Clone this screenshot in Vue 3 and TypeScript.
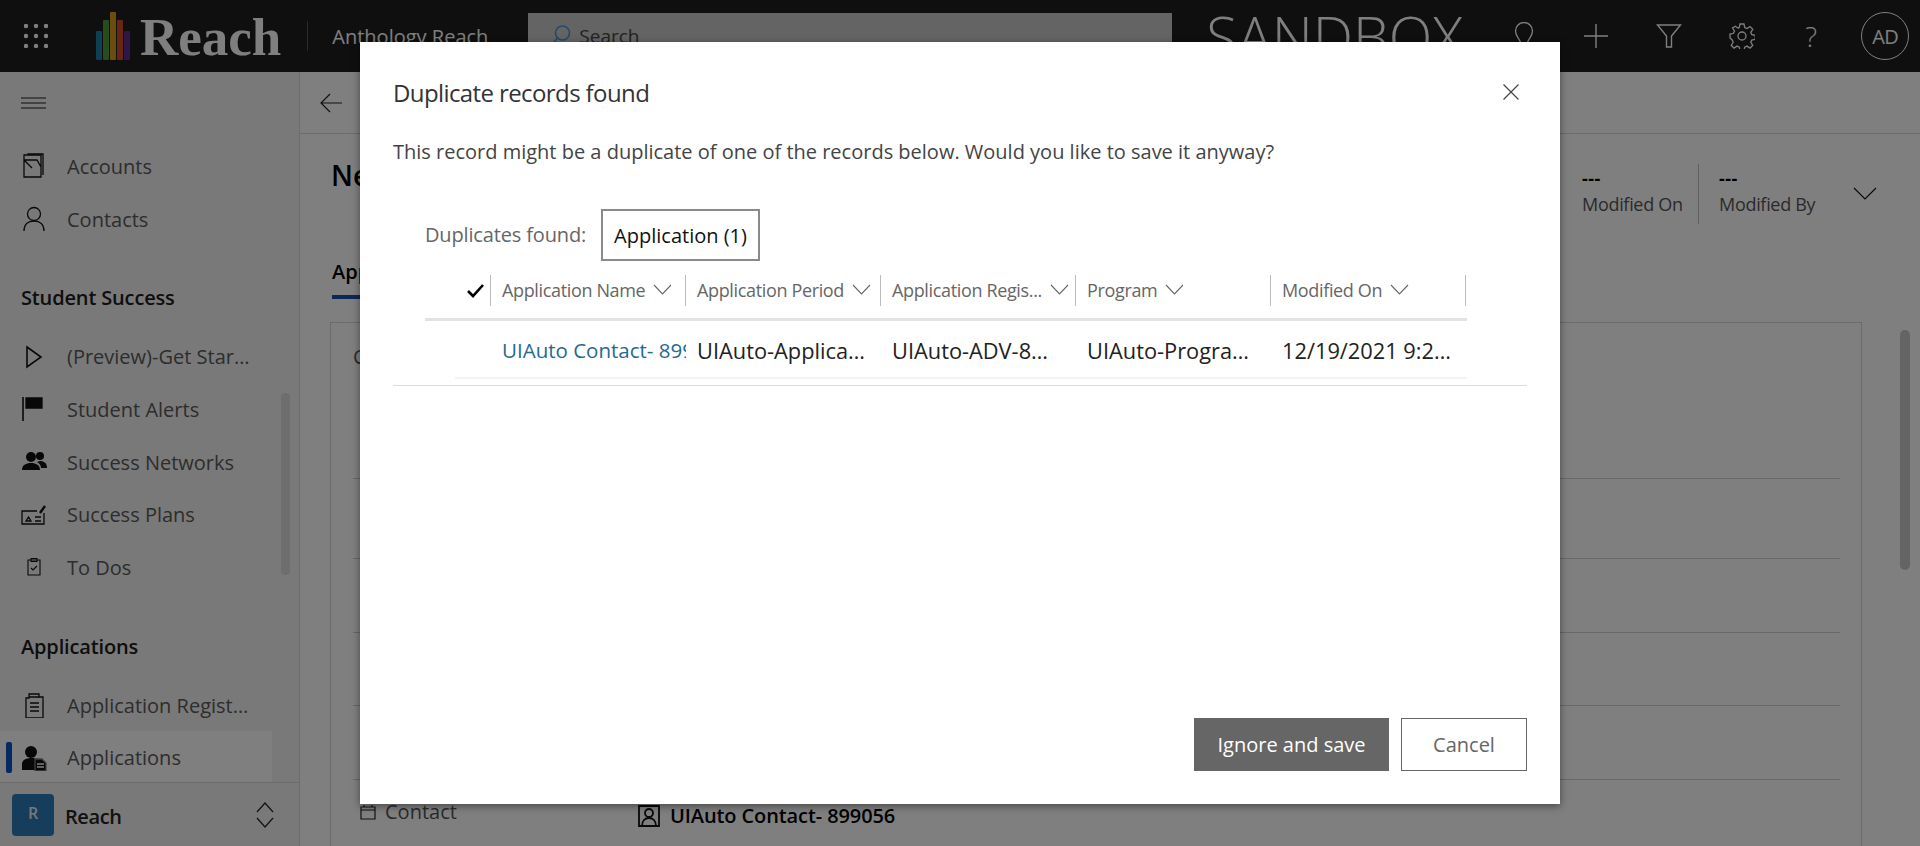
<script setup lang="ts">
import { ref } from 'vue'

interface NavItem {
  label: string
  icon: string
  active?: boolean
}

const topItems: NavItem[] = [
  { label: 'Accounts', icon: 'accounts' },
  { label: 'Contacts', icon: 'contacts' },
]
const successItems: NavItem[] = [
  { label: '(Preview)-Get Started', icon: 'play' },
  { label: 'Student Alerts', icon: 'flag' },
  { label: 'Success Networks', icon: 'people' },
  { label: 'Success Plans', icon: 'plan' },
  { label: 'To Dos', icon: 'todo' },
]
const applicationItems: NavItem[] = [
  { label: 'Application Registrations', icon: 'docs' },
  { label: 'Applications', icon: 'applicant', active: true },
]
const groups = [
  { title: '', items: topItems },
  { title: 'Student Success', items: successItems },
  { title: 'Applications', items: applicationItems },
]

const logoBars = [
  { h: 29, c: '#1d7ea8' },
  { h: 40, c: '#4e9a3a' },
  { h: 48, c: '#d99a1c' },
  { h: 40, c: '#cf4f26' },
  { h: 29, c: '#5d2f8e' },
]

// only the first row's label peeks out from behind the dialog
const formRows = [
  { h: 156, label: 'Contact Information' },
  { h: 80, label: '' },
  { h: 74, label: '' },
  { h: 73, label: '' },
  { h: 74, label: '' },
]

const columns = ['Application Name', 'Application Period', 'Application Regis...', 'Program', 'Modified On']
const cells = ['UIAuto-Application Period', 'UIAuto-ADV-899056', 'UIAuto-Program-899', '12/19/2021 9:27 AM']
const open = ref(true)
</script>

<template>
  <div class="app">
    <header class="topbar">
      <svg class="waffle" width="24" height="24" viewBox="0 0 24 24" fill="#fff">
        <template v-for="y in [2, 12, 22]" :key="y">
          <circle v-for="x in [2, 12, 22]" :key="x" :cx="x" :cy="y" r="2.2" />
        </template>
      </svg>
      <div class="logo">
        <span class="bars">
          <i v-for="b in logoBars" :key="b.c" :style="{ height: b.h + 'px', background: b.c }"></i>
        </span>
        <span class="logo-word">Reach</span>
      </div>
      <span class="top-sep"></span>
      <span class="app-name">Anthology Reach</span>
      <div class="search">
        <svg width="20" height="24" viewBox="0 0 20 24" fill="none" stroke="#4a90d9" stroke-width="1.6">
          <circle cx="11.5" cy="9" r="7" />
          <path d="M6.5 14 1 21" />
        </svg>
        <span>Search</span>
      </div>
      <span class="sandbox">SANDBOX</span>
      <div class="top-icons">
        <svg width="24" height="28" viewBox="0 0 24 28" fill="none" stroke="#fff" stroke-width="1.3">
          <path d="M8.5 21c0-4-5-6-5-12a8.500 8.500 0 0 1 17 0c0 6-5 8-5 12zM9 24h6" />
        </svg>
        <svg width="26" height="26" viewBox="0 0 26 26" stroke="#fff" stroke-width="1.4"><path d="M13 1v24M1 13h24" /></svg>
        <svg width="26" height="24" viewBox="0 0 26 24" fill="none" stroke="#fff" stroke-width="1.4">
          <path d="M1.500 1h23L15.500 12v11h-5V12z" />
        </svg>
        <svg width="26" height="26" viewBox="0 0 26 26" fill="none" stroke="#fff" stroke-width="1.300">
          <circle cx="13" cy="13" r="4" />
          <path d="M11 1h4l.7 3.500 2.300 1 3-2 2.800 2.800-2 3 1 2.300 3.500.7v4l-3.500.7-1 2.300 2 3-2.800 2.800-3-2-2.300 1-.7 3.500h-4l-.7-3.500-2.300-1-3 2-2.800-2.800 2-3-1-2.300L1 15v-4l3.500-.7 1-2.300-2-3L6.300 3.200l3 2 1-.9z" />
        </svg>
        <span class="help">?</span>
      </div>
      <span class="avatar">AD</span>
    </header>

    <div class="shell">
      <aside class="sidebar">
        <div class="nav">
          <button class="menu-btn" aria-label="Menu">
            <svg width="25" height="12" viewBox="0 0 25 12" stroke="#1a1a1a" stroke-width="1.2"><path d="M0 1h25M0 6h25M0 11h25" /></svg>
          </button>
          <section v-for="g in groups" :key="g.title" class="group">
            <h3 v-if="g.title">{{ g.title }}</h3>
            <a v-for="item in g.items" :key="item.label" class="nav-item" :class="{ active: item.active }">
              <span class="nav-icon">
                <svg width="26" height="26" viewBox="0 0 26 26" fill="none" stroke="#111" stroke-width="1.3">
                  <template v-if="item.icon === 'accounts'">
                    <path d="M3 2h17v22H3zM3 7h13l4 7M3 7l8 8" /><path d="M7 2V1h15v21" />
                  </template>
                  <template v-else-if="item.icon === 'contacts'">
                    <circle cx="13" cy="8" r="6.500" /><path d="M3 25c0-7 4-10 10-10s10 3 10 10" />
                  </template>
                  <path v-else-if="item.icon === 'play'" d="M6 3l14 10L6 23z" stroke-width="1.600" />
                  <template v-else-if="item.icon === 'flag'">
                    <path d="M2 1v24" stroke-width="1.600" /><path d="M5 2h16v10H5z" fill="#111" />
                  </template>
                  <g v-else-if="item.icon === 'people'" fill="#111" stroke="none">
                    <circle cx="10" cy="8" r="5" /><circle cx="19" cy="7" r="4" />
                    <path d="M1 21c0-5 4-7 9-7s9 2 9 7zM19 12c4 0 7 2 7 7h-6c0-3-2-5-4-6z" />
                  </g>
                  <template v-else-if="item.icon === 'plan'">
                    <path d="M23 11v11H1V9h15" /><path d="M19 11 24 4" stroke-width="2.400" />
                    <path d="M5 19l2.500-4 2.500 4zM14 15h6M14 19h6" />
                  </template>
                  <template v-else-if="item.icon === 'todo'">
                    <path d="M7 6h12v15H7z" stroke-width="1.100" /><path d="M10 4.500h6v3h-6zM10 14l2 2 4-4" stroke-width="1.100" />
                  </template>
                  <template v-else-if="item.icon === 'docs'">
                    <path d="M8 2h10v3h4v21H5V6h3z" /><path d="M8 5h10M9 11h9M9 15h9M9 19h9" />
                  </template>
                  <g v-else-if="item.icon === 'applicant'" fill="#111" stroke="none">
                    <circle cx="10" cy="7" r="6" />
                    <path d="M1 25v-6c0-4 4-6 10-6 2 0 4 .5 5 1v11z" />
                    <path d="M14 14h7l4 4v8H14z" stroke="#7f7f7f" />
                    <path d="M16 19h7M16 22h7" stroke="#fff" />
                  </g>
                </svg>
              </span>
              <span class="nav-label">{{ item.label }}</span>
            </a>
          </section>
          <span class="nav-scroll"></span>
        </div>
        <footer class="area">
          <span class="area-badge">R</span>
          <span class="area-name">Reach</span>
          <svg width="18" height="26" viewBox="0 0 18 26" fill="none" stroke="#222" stroke-width="1.200"><path d="M1 10 9 1l8 9M1 16l8 9 8-9" /></svg>
        </footer>
      </aside>

      <main class="content">
        <div class="commandbar">
          <svg width="22" height="20" viewBox="0 0 22 20" fill="none" stroke="#222" stroke-width="1.200"><path d="M22 10H1M10 1 1 10l9 9" /></svg>
        </div>
        <div class="form-head">
          <h1>New Application</h1>
          <div class="head-fields">
            <div class="head-field"><b>---</b><span>Modified On</span></div>
            <div class="head-field last"><b>---</b><span>Modified By</span></div>
            <svg width="24" height="13" viewBox="0 0 24 13" fill="none" stroke="#111" stroke-width="1.200"><path d="M1 1l11 11L23 1" /></svg>
          </div>
        </div>
        <div class="form-tabs"><span>Application</span></div>
        <div class="card">
          <div v-for="(r, i) in formRows" :key="i" class="form-row" :style="{ height: r.h + 'px' }">{{ r.label }}</div>
          <div class="contact-row">
            <span class="contact-label">
              <svg width="16" height="16" viewBox="0 0 16 16" fill="none" stroke="#222" stroke-width="1.200"><path d="M1 3h14v12H1zM1 6h14M4 1v2M12 1v2" /></svg>
              Contact
            </span>
            <span class="contact-value">
              <svg width="22" height="22" viewBox="0 0 22 22" fill="none" stroke="#111" stroke-width="1.800"><path d="M1 1h20v20H1z" /><circle cx="11" cy="8" r="4" /><path d="M4 21c0-5 3-8 7-8s7 3 7 8" /></svg>
              UIAuto Contact- 899056
            </span>
          </div>
        </div>
        <span class="page-scroll"></span>
      </main>
    </div>

    <div v-if="open" class="overlay">
      <div class="dialog" role="dialog">
        <div class="dialog-title">
          <h2>Duplicate records found</h2>
          <button class="close" aria-label="Close" @click="open = false">
            <svg width="16" height="16" viewBox="0 0 16 16" stroke="#444" stroke-width="1.200"><path d="M.5.5l15 15M15.500.5l-15 15" /></svg>
          </button>
        </div>
        <p class="message">This record might be a duplicate of one of the records below. Would you like to save it anyway?</p>
        <div class="dup-tabs">
          <span class="dup-label">Duplicates found:</span>
          <span class="dup-tab">Application (1)</span>
        </div>
        <div class="grid">
          <div class="grid-head">
            <span class="check-col">
              <svg width="17" height="14" viewBox="0 0 17 14" fill="none" stroke="#000" stroke-width="2.600"><path d="M1 7l5 5L16 1" /></svg>
            </span>
            <span v-for="c in columns" :key="c" class="col-head">
              <span>{{ c }}</span>
              <svg width="19" height="11" viewBox="0 0 19 11" fill="none" stroke="#666" stroke-width="1.100"><path d="M1 1l8.500 9L18 1" /></svg>
            </span>
          </div>
          <div class="grid-row">
            <a class="cell link">UIAuto Contact- 899056</a>
            <span v-for="c in cells" :key="c" class="cell">{{ c }}</span>
          </div>
        </div>
        <hr class="divider" />
        <div class="actions">
          <button class="primary">Ignore and save</button>
          <button class="secondary" @click="open = false">Cancel</button>
        </div>
      </div>
    </div>
  </div>
</template>

<style scoped>
.app {
  position: relative;
  width: 1920px;
  height: 846px;
  overflow: hidden;
  background: #fff;
  font-family: "Open Sans", "Noto Sans", sans-serif;
  color: #222;
}
.topbar {
  height: 72px;
  background: #1e1e1e;
  display: flex;
  align-items: center;
  padding-left: 24px;
  color: #fff;
  overflow: hidden;
}
.waffle {
  flex: none;
}
.logo {
  display: flex;
  align-items: flex-end;
  gap: 10px;
  margin-left: 48px;
  height: 48px;
}
.bars {
  display: flex;
  align-items: flex-end;
  gap: 1px;
}
.bars i {
  display: block;
  width: 6px;
  border-radius: 1px;
}
.logo-word {
  font-family: "Liberation Serif", serif;
  font-weight: 700;
  font-size: 53px;
  line-height: 46px;
}
.top-sep {
  width: 1px;
  height: 30px;
  background: #555;
  margin-left: 26px;
}
.app-name {
  margin-left: 24px;
  font-size: 20px;
  width: 196px;
  white-space: nowrap;
}
.search {
  align-self: flex-start;
  margin-top: 13px;
  width: 644px;
  height: 46px;
  background: #c8c8c8;
  display: flex;
  align-items: center;
  gap: 8px;
  padding-left: 23px;
  box-sizing: border-box;
  font-size: 19px;
  color: #444;
}
.sandbox {
  margin-left: 34px;
  font-size: 57px;
  font-weight: 300;
  width: 262px;
  white-space: nowrap;
  color: #fff;
}
.top-icons {
  display: flex;
  align-items: center;
  margin-left: 44px;
  gap: 47px;
}
.help {
  font-size: 28px;
  font-weight: 300;
  width: 14px;
  margin-left: 3px;
}
.avatar {
  margin-left: 42px;
  width: 46px;
  height: 46px;
  border: 1px solid #fff;
  border-radius: 50%;
  display: flex;
  align-items: center;
  justify-content: center;
  font-size: 20px;
  letter-spacing: -0.5px;
}
.shell {
  height: 774px;
  display: flex;
}
.sidebar {
  width: 300px;
  flex: none;
  box-sizing: border-box;
  background: #f3f3f3;
  border-right: 1px solid #d8d8d8;
  display: flex;
  flex-direction: column;
}
.nav {
  position: relative;
  height: 710px;
  overflow: hidden;
}
.menu-btn {
  display: block;
  width: 100%;
  height: 62px;
  padding: 0 0 0 21px;
  border: 0;
  background: none;
  text-align: left;
  margin-bottom: 5px;
}
.menu-btn svg {
  display: block;
}
.group + .group {
  margin-top: 27px;
}
.group h3 {
  margin: 0 0 5px;
  height: 53px;
  line-height: 53px;
  padding-left: 21px;
  font-size: 20px;
  font-weight: 600;
  letter-spacing: -0.15px;
  color: #1c1c1c;
}
.nav-item {
  display: flex;
  align-items: center;
  width: 272px;
  height: 52.7px;
  padding: 2px 0 0 21px;
  box-sizing: border-box;
  position: relative;
}
.nav-item.active {
  background: #fff;
}
.nav-item.active::before {
  content: "";
  position: absolute;
  left: 6px;
  top: 11px;
  bottom: 10px;
  width: 6px;
  border-radius: 2px;
  background: #0a52c4;
}
.nav-icon {
  width: 46px;
  flex: none;
  display: flex;
}
.nav-label {
  font-size: 20px;
  color: #5a5a5a;
  width: 185px;
  white-space: nowrap;
  overflow: hidden;
  text-overflow: ellipsis;
}
.nav-scroll {
  position: absolute;
  left: 281px;
  top: 321px;
  width: 9px;
  height: 182px;
  border-radius: 4px;
  background: #dcdcdc;
}
.area {
  flex: 1;
  border-top: 1px solid #d8d8d8;
  display: flex;
  align-items: center;
  padding: 0 25px 0 12px;
}
.area-badge {
  width: 42px;
  height: 42px;
  border-radius: 4px;
  background: #2e7ab8;
  color: #eee;
  font-size: 16px;
  font-weight: 600;
  text-align: center;
  line-height: 38px;
}
.area-name {
  flex: 1;
  margin: 3px 0 0 11px;
  font-size: 20px;
  font-weight: 600;
  letter-spacing: -0.4px;
}
.content {
  flex: 1;
  position: relative;
  min-width: 0;
}
.commandbar {
  height: 62px;
  border-bottom: 1px solid #d8d8d8;
  display: flex;
  align-items: center;
  padding-left: 20px;
  box-sizing: border-box;
}
.form-head {
  display: flex;
  height: 88px;
  padding-left: 31px;
  padding-top: 22px;
  box-sizing: border-box;
}
.form-head h1 {
  margin: 0;
  font-size: 28px;
  line-height: 38px;
  font-weight: 600;
  color: #000;
}
.head-fields {
  margin-left: auto;
  display: flex;
  align-items: flex-start;
  padding-right: 43px;
  margin-top: 8px;
}
.head-field {
  display: flex;
  flex-direction: column;
  width: 118px;
  height: 60px;
  border-right: 1px solid #c0c0c0;
  font-size: 18px;
  letter-spacing: -0.3px;
  color: #555;
  line-height: 24px;
  padding-left: 1px;
  box-sizing: border-box;
}
.head-field b {
  color: #000;
  line-height: 28px;
  letter-spacing: 0.5px;
}
.head-field.last {
  border: 0;
  margin-left: 19px;
  width: 135px;
}
.head-fields svg {
  margin-top: 23px;
}
.form-tabs {
  height: 77px;
  padding: 0 0 0 32px;
  box-sizing: border-box;
}
.form-tabs span {
  display: inline-block;
  padding-top: 36px;
  height: 77px;
  box-sizing: border-box;
  border-bottom: 4px solid #1a4fb0;
  font-size: 20px;
  font-weight: 600;
  color: #000;
}
.card {
  margin: 23px 0 0 30px;
  width: 1532px;
  box-sizing: border-box;
  height: 600px;
  border: 1px solid #d8d8d8;
  padding: 0 21px 0 22px;
}
.form-row {
  box-sizing: border-box;
  padding-top: 20px;
  font-size: 20px;
  color: #555;
  border-bottom: 1px solid #d0d0d0;
}
.contact-row {
  display: flex;
  align-items: flex-start;
  padding: 18px 0 0 7px;
  font-size: 20px;
}
.contact-label {
  display: flex;
  align-items: center;
  gap: 9px;
  width: 278px;
  color: #555;
}
.contact-value {
  display: flex;
  align-items: center;
  gap: 10px;
  margin-top: 4px;
  font-weight: 600;
  color: #000;
  letter-spacing: -0.1px;
}
.page-scroll {
  position: absolute;
  right: 10px;
  top: 258px;
  width: 10px;
  height: 240px;
  border-radius: 5px;
  background: #c8c8c8;
}
.overlay {
  position: absolute;
  inset: 0;
  background: rgba(0, 0, 0, 0.5);
  display: flex;
  justify-content: center;
  align-items: flex-start;
}
.dialog {
  margin-top: 42px;
  width: 1200px;
  height: 762px;
  box-sizing: border-box;
  background: #fff;
  padding: 0 33px 33px;
  display: flex;
  flex-direction: column;
  box-shadow: 0 2px 8px rgba(0, 0, 0, 0.45);
}
.dialog-title {
  height: 70px;
  padding-top: 34px;
  box-sizing: border-box;
  display: flex;
  justify-content: space-between;
  align-items: flex-start;
}
.dialog-title h2 {
  margin: 0;
  font-size: 24px;
  line-height: 34px;
  font-weight: 400;
  letter-spacing: -0.6px;
  color: #333;
}
.close {
  border: 0;
  background: none;
  padding: 0;
  margin: 8px 8px 0 0;
  width: 16px;
  height: 16px;
}
.message {
  margin: 26px 0 0;
  font-size: 20px;
  line-height: 28px;
  color: #444;
}
.dup-tabs {
  margin: 43px 0 0 32px;
  display: flex;
  align-items: center;
  height: 52px;
}
.dup-label {
  width: 176px;
  margin-top: -2px;
  font-size: 20px;
  letter-spacing: -0.15px;
  color: #666;
}
.dup-tab {
  box-sizing: border-box;
  height: 52px;
  width: 159px;
  border: 2px solid #8a8a8a;
  font-size: 20px;
  line-height: 50px;
  text-align: center;
  color: #111;
}
.grid {
  margin: 14px 0 0 32px;
  width: 1042px;
}
.grid-head {
  display: flex;
  border-bottom: 3px solid #e2e2e2;
  height: 43px;
}
.check-col {
  width: 66px;
  height: 31px;
  flex: none;
  box-sizing: border-box;
  border-right: 1px solid #bbb;
  display: flex;
  justify-content: flex-end;
  align-items: center;
  padding-right: 6px;
}
.col-head {
  width: 195px;
  height: 31px;
  box-sizing: border-box;
  border-right: 1px solid #bbb;
  display: flex;
  align-items: center;
  gap: 8px;
  padding: 0 0 2px 11px;
  font-size: 18px;
  letter-spacing: -0.35px;
  color: #666;
  white-space: nowrap;
}
.col-head svg {
  flex: none;
}
.grid-row {
  margin-left: 30px;
  height: 58px;
  box-sizing: border-box;
  border-bottom: 2px solid #f3f3f3;
  padding: 2px 0 0 47px;
  display: flex;
  align-items: center;
}
.cell {
  width: 195px;
  padding-left: 11px;
  padding-right: 12px;
  box-sizing: border-box;
  font-size: 21.8px;
  color: #222;
  white-space: nowrap;
  overflow: hidden;
  text-overflow: ellipsis;
}
.cell:nth-child(3) {
  padding-right: 20px;
}
.cell.link {
  padding: 0;
  text-overflow: clip;
  width: 184px;
  color: #1f6a94;
  font-size: 20.5px;
}
.divider {
  margin: 6px 0 0;
  border: 0;
  border-top: 1px solid #dcdcdc;
}
.actions {
  margin-top: auto;
  display: flex;
  justify-content: flex-end;
  gap: 12px;
}
.actions button {
  height: 53px;
  font-family: inherit;
  font-size: 20px;
  padding: 0;
}
.primary {
  width: 195px;
  border: 0;
  background: #666;
  color: #fff;
}
.secondary {
  width: 126px;
  background: #fff;
  border: 1px solid #666;
  color: #666;
}
</style>

<style>
html,
body {
  margin: 0;
  overflow: hidden;
}
</style>
